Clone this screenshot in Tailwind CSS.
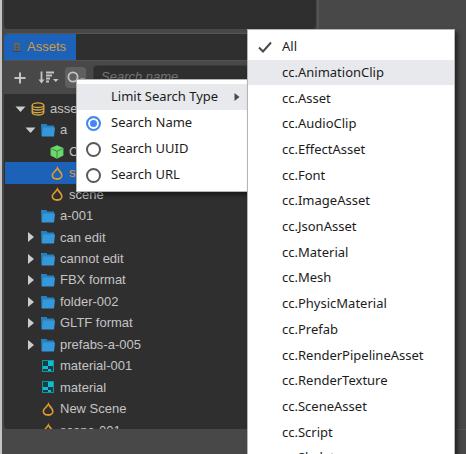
<!DOCTYPE html>
<html lang="en">
  <head>
    <meta charset="UTF-8" />
    <meta name="viewport" content="width=device-width, initial-scale=1.0" />
    <title>Assets</title>
    <script src="https://cdn.jsdelivr.net/npm/@tailwindcss/browser@4"></script>
  </head>
  <body class="h-screen overflow-hidden bg-[#484848] font-['Liberation_Sans',Arial,sans-serif] text-[13px] text-[#c4c4c4]">
    <!-- icons used by the tree -->
    <svg class="hidden">
      <symbol id="down" viewBox="0 0 11 14"><path d="M0.5 4.5h10L5.5 10z" fill="#ccc" /></symbol>
      <symbol id="right" viewBox="0 0 11 14"><path d="M3 2l6 5-6 5z" fill="#ccc" /></symbol>
      <symbol id="db" viewBox="0 0 14 14">
        <g fill="none" stroke="#d6a73e" stroke-width="1.3">
          <ellipse cx="7" cy="3.2" rx="5.8" ry="2.3" />
          <path d="M1.2 3.2v7.4c0 1.3 2.6 2.4 5.8 2.4s5.8-1.1 5.8-2.4V3.2M1.2 5.8C1.2 7.1 3.8 8 7 8s5.8-.9 5.8-2.2M1.2 8.4c0 1.3 2.6 2.2 5.8 2.2s5.8-.9 5.8-2.2" />
        </g>
      </symbol>
      <symbol id="folder" viewBox="0 0 14 14">
        <path d="M0 1h5.500l1 1.500H13V13H.5z" fill="#2780bf" />
        <path d="M2 4.500h12L13 13.500H.8z" fill="#3498db" />
      </symbol>
      <symbol id="cube" viewBox="0 0 14 14">
        <path d="M7 .3l6.400 2.800v7.400L7 13.700.6 10.500V3.100z" fill="#6ad86b" />
        <path d="M1.500 3.800L7 6.200l5.500-2.400M7 6.200v6.800" fill="none" stroke="#2f7a3a" stroke-width=".8" />
      </symbol>
      <symbol id="drop" viewBox="0 0 14 14">
        <path fill-rule="evenodd" d="M7.300 0C8 3 12.600 5.800 12.600 9.300 12.600 12.200 10 14 7.100 14S1.600 12.200 1.600 9.300C1.600 6 6.600 4 7.300 0zM7.300 3.200C6.300 5.800 3.200 7 3.200 9.400c0 1.700 1.600 2.700 3.900 2.700s4-1 4-2.700C11.100 7.200 8.200 5.800 7.300 3.200z" fill="#e09b2d" />
      </symbol>
      <symbol id="material" viewBox="0 0 14 14">
        <rect x="1.500" y="1.500" width="11" height="11" fill="#173d43" stroke="#0e97a7" />
        <path d="M7 2h5v5H7zM2 7h5v3H2zM7 10h3v2H7z" fill="#13bdd0" />
      </symbol>
    </svg>

    <div class="relative flex h-full overflow-hidden border-l-2 border-[#c4c4c4] pl-[2px]">
      <div class="flex w-[312px] shrink-0 flex-col">
        <section class="h-[29px] shrink-0 rounded-b bg-[#2f2f2f]"></section>

        <section class="mt-[4px] flex h-[396px] shrink-0 flex-col overflow-hidden rounded-sm border-t border-[#555]">
          <header class="flex h-[26px] shrink-0 bg-[#2f2f2f]">
            <button class="flex w-[72px] items-center gap-[5px] bg-[#1c62b9] pl-[8px] text-[#d49a3a]">
              <svg class="size-[10px]" viewBox="0 0 10 12" fill="none" stroke="#4e5764">
                <path d="M1.500 11V2.500q0-1.500 1.500-1.500h4q1.500 0 1.500 1.500V11" fill="#6d7580" />
                <path d="M0 11.500h10M3 3.500h4M3 5.500h4M3 7.500h4M3 9.500h4" stroke="#343b47" />
              </svg>
              Assets
            </button>
          </header>

          <div class="flex h-[34px] shrink-0 items-center border-t border-[#525252] bg-[#484848] pl-[8px]">
            <button class="grid w-[15px] place-items-center" aria-label="Create">
              <svg class="size-[12px]" viewBox="0 0 12 12"><path d="M6 .5v11M.5 6h11" stroke="#c4c4c4" stroke-width="2" /></svg>
            </button>
            <button class="ml-[11px] grid w-[21px] place-items-center" aria-label="Sort">
              <svg class="h-[13px] w-[21px]" viewBox="0 0 21 13">
                <path d="M3.500 0.500v10M8 1.500h8M8 4.500h6M8 7.500h4M8 10.500h3" stroke="#c4c4c4" stroke-width="1.800" />
                <path d="M.5 8.500h6l-3 4zM15 8h5.500l-2.700 3z" fill="#c4c4c4" />
              </svg>
            </button>
            <button class="ml-[6px] flex h-[21px] w-[21px] items-center rounded-sm bg-[#5f5f5f] pl-[2px]" aria-label="Search type">
              <svg class="h-[14px] w-[18px]" viewBox="0 0 18 14">
                <circle cx="6" cy="6" r="4.600" fill="none" stroke="#c4c4c4" stroke-width="1.800" />
                <path d="M9.500 9.500l3 3" stroke="#c4c4c4" stroke-width="2" />
                <path d="M13 7h5l-2.500 3z" fill="#999" />
              </svg>
            </button>
            <input type="text" aria-label="Search" placeholder="Search name" class="ml-[7px] h-[26px] min-w-0 flex-1 rounded border border-[#3a3a3a] bg-[#2f2f2f] px-[7px] pb-[3px] italic placeholder:text-[#747474]" />
          </div>

          <div class="flex-1 overflow-hidden bg-[#2f2f2f] pt-[4px] pl-px">
            <ul class="flex h-[343px] flex-col *:flex *:flex-1 *:items-center *:gap-[5px]">
              <li class="pl-[10px]"><svg class="h-[14px] w-[11px]"><use href="#down" /></svg><svg class="size-[14px]"><use href="#db" /></svg>assets</li>
              <li class="pl-[20px]"><svg class="h-[14px] w-[11px]"><use href="#down" /></svg><svg class="size-[14px]"><use href="#folder" /></svg>a</li>
              <li class="pl-[45px]"><svg class="size-[14px]"><use href="#cube" /></svg>Cube</li>
              <li class="bg-[#1c62b9] pl-[45px] text-[#e09b2d]"><svg class="size-[14px]"><use href="#drop" /></svg>scene</li>
              <li class="pl-[45px]"><svg class="size-[14px]"><use href="#drop" /></svg>scene</li>
              <li class="pl-[36px]"><svg class="size-[14px]"><use href="#folder" /></svg>a-001</li>
              <li class="pl-[20px]"><svg class="h-[14px] w-[11px]"><use href="#right" /></svg><svg class="size-[14px]"><use href="#folder" /></svg>can edit</li>
              <li class="pl-[20px]"><svg class="h-[14px] w-[11px]"><use href="#right" /></svg><svg class="size-[14px]"><use href="#folder" /></svg>cannot edit</li>
              <li class="pl-[20px]"><svg class="h-[14px] w-[11px]"><use href="#right" /></svg><svg class="size-[14px]"><use href="#folder" /></svg>FBX format</li>
              <li class="pl-[20px]"><svg class="h-[14px] w-[11px]"><use href="#right" /></svg><svg class="size-[14px]"><use href="#folder" /></svg>folder-002</li>
              <li class="pl-[20px]"><svg class="h-[14px] w-[11px]"><use href="#right" /></svg><svg class="size-[14px]"><use href="#folder" /></svg>GLTF format</li>
              <li class="pl-[20px]"><svg class="h-[14px] w-[11px]"><use href="#right" /></svg><svg class="size-[14px]"><use href="#folder" /></svg>prefabs-a-005</li>
              <li class="pl-[36px]"><svg class="size-[14px]"><use href="#material" /></svg>material-001</li>
              <li class="pl-[36px]"><svg class="size-[14px]"><use href="#material" /></svg>material</li>
              <li class="pl-[36px]"><svg class="size-[14px]"><use href="#drop" /></svg>New Scene</li>
              <li class="pl-[36px]"><svg class="size-[14px]"><use href="#drop" /></svg>scene-001</li>
            </ul>
          </div>
        </section>
      </div>
      <div class="ml-px flex-1 border-l-2 border-[#545454]">
        <div class="h-[430px] border-b border-[#545454]"></div>
      </div>

      <!-- search type menu -->
      <div class="absolute top-[79px] left-[74px] w-[172px] border border-[#b5b5b5] bg-white pt-[4px] pb-[3px] font-['Noto_Sans',sans-serif] text-[13px] text-[#1c1c1c] shadow-[3px_3px_4px_rgba(0,0,0,0.5)]">
        <button class="flex h-[26px] w-full items-center justify-between bg-[#e8e9ed] pr-[7px] pl-[34px]">
          Limit Search Type
          <svg class="h-[8px] w-[6px]" viewBox="0 0 6 8"><path d="M0.500 0l5 4-5 4z" fill="#4a4a4a" /></svg>
        </button>
        <label class="flex h-[26px] items-center gap-[10px] pl-[9px]"><input type="radio" name="search" checked class="size-[15px] appearance-none rounded-full border-2 border-[#4285f4] bg-[#4285f4] shadow-[inset_0_0_0_2px_#fff]" />Search Name</label>
        <label class="flex h-[26px] items-center gap-[10px] pl-[9px]"><input type="radio" name="search" class="size-[15px] appearance-none rounded-full border-2 border-[#5a5a5a]" />Search UUID</label>
        <label class="flex h-[26px] items-center gap-[10px] pl-[9px]"><input type="radio" name="search" class="size-[15px] appearance-none rounded-full border-2 border-[#5a5a5a]" />Search URL</label>
      </div>

      <!-- asset type submenu -->
      <div class="absolute top-[29px] left-[245px] w-[208px] border border-[#b5b5b5] bg-white py-[4px] font-['Noto_Sans',sans-serif] text-[13px] text-[#1c1c1c] shadow-[3px_3px_4px_rgba(0,0,0,0.5)]">
        <div class="flex h-[437px] flex-col *:flex *:flex-1 *:items-center *:pl-[34px]">
          <button class="relative">
            <svg class="absolute left-[10px] h-[12px] w-[14px]" viewBox="0 0 14 12"><path d="M1 6.500l4 4L13 1.500" fill="none" stroke="#4a4a4a" stroke-width="2" /></svg>
            All
          </button>
          <button class="bg-[#e8e9ed]">cc.AnimationClip</button>
          <button>cc.Asset</button>
          <button>cc.AudioClip</button>
          <button>cc.EffectAsset</button>
          <button>cc.Font</button>
          <button>cc.ImageAsset</button>
          <button>cc.JsonAsset</button>
          <button>cc.Material</button>
          <button>cc.Mesh</button>
          <button>cc.PhysicMaterial</button>
          <button>cc.Prefab</button>
          <button>cc.RenderPipelineAsset</button>
          <button>cc.RenderTexture</button>
          <button>cc.SceneAsset</button>
          <button>cc.Script</button>
          <button>cc.Skeleton</button>
        </div>
      </div>
    </div>
  </body>
</html>
